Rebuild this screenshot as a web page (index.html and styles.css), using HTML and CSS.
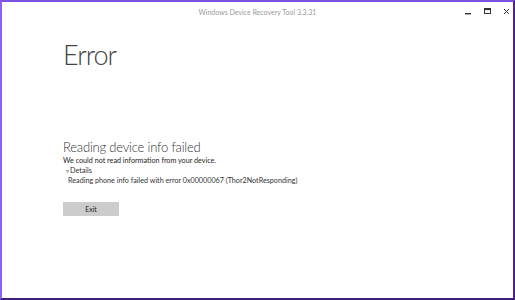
FILE: index.html
```html
<!DOCTYPE html>
<html>
<head>
<meta charset="utf-8">
<link rel="stylesheet" href="styles.css">
</head>
<body>
<div class="window">
  <div class="titlebar">
    <div class="title">Windows Device Recovery Tool 3.3.31</div>
    <div class="controls">
      <svg class="ctl" width="9" height="9" viewBox="0 0 9 9"><rect x="1" y="6" width="6" height="1.4" fill="#333"/></svg>
      <svg class="ctl" width="9" height="9" viewBox="0 0 9 9"><rect x="1.5" y="1.5" width="6" height="5" fill="none" stroke="#333" stroke-width="1"/><rect x="1.5" y="1.5" width="6" height="1.6" fill="#333"/></svg>
      <svg class="ctl" width="9" height="9" viewBox="0 0 9 9"><path d="M2 2 L7 7 M7 2 L2 7" stroke="#333" stroke-width="1"/></svg>
    </div>
  </div>
  <div class="content">
    <h1 class="heading">Error</h1>
    <div class="message">
      <h2 class="subheading">Reading device info failed</h2>
      <p class="desc">We could not read information from your device.</p>
      <div class="details-toggle"><span class="arrow">&#9663;</span>Details</div>
      <p class="details">Reading phone info failed with error 0x00000067 (Thor2NotResponding)</p>
      <button class="btn">Exit</button>
    </div>
  </div>
</div>
</body>
</html>
```
FILE: styles.css
```css
html, body {
  margin: 0;
  padding: 0;
  background: #ffffff;
}
body {
  font-family: Lato, "Open Sans", "Liberation Sans", sans-serif;
  color: #222;
}
.window {
  box-sizing: border-box;
  width: 515px;
  height: 300px;
  border-top: 2px solid #7b52e0;
  border-left: 2px solid #8a63ec;
  border-right: 2px solid #4a2396;
  border-bottom: 2px solid #3d1d80;
  background: #fff;
  display: flex;
  flex-direction: column;
}
.titlebar {
  height: 19px;
  display: flex;
  align-items: center;
  justify-content: center;
  position: relative;
}
.title {
  font-size: 7px;
  color: #9a9a9a;
}
.controls {
  position: absolute;
  right: 2px;
  top: 5px;
  display: flex;
  gap: 10px;
}
.ctl {
  display: block;
}
.content {
  padding-left: 61px;
}
.heading {
  margin: 16px 0 0 0;
  font-size: 27px;
  font-weight: 300;
  line-height: 36px;
  color: #444;
  letter-spacing: -1px;
}
.message {
  margin-top: 66px;
}
.subheading {
  margin: 0;
  font-size: 13px;
  font-weight: 300;
  line-height: 17px;
  color: #333;
  letter-spacing: -0.2px;
}
.desc {
  margin: 0;
  font-size: 7.2px;
  line-height: 10px;
  color: #222;
}
.details-toggle {
  margin-left: 3px;
  font-size: 7.2px;
  line-height: 10px;
  color: #333;
}
.arrow {
  font-size: 6px;
  margin-right: 1px;
}
.details {
  margin: 0 0 0 5px;
  font-size: 7.2px;
  line-height: 10px;
  color: #333;
}
.btn {
  margin-top: 16px;
  width: 56px;
  height: 14px;
  border: none;
  background: #cccccc;
  font-family: inherit;
  font-size: 7px;
  color: #222;
  padding: 0;
}
```
